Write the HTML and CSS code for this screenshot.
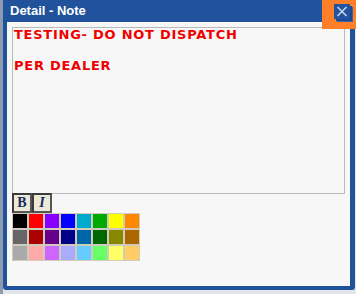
FILE: index.html
```html
<!DOCTYPE html>
<html>
<head>
<meta charset="utf-8">
<link rel="stylesheet" href="styles.css">
</head>
<body>
<div class="dialog">
  <div class="titlebar"><span class="title">Detail - Note</span></div>
  <div class="focus">
    <div class="close">
      <svg width="16" height="15" viewBox="0 0 16 15"><path d="M3.5 3 L12.5 12 M12.5 3 L3.5 12" stroke="#c9d5ee" stroke-width="1.6" fill="none"/></svg>
    </div>
  </div>
  <div class="content">
    <div class="editor">
      <div class="line">TESTING- DO NOT DISPATCH</div>
      <div class="line">&nbsp;</div>
      <div class="line">PER DEALER</div>
    </div>
    <div class="toolbar">
      <button class="tbtn bold">B</button>
      <button class="tbtn italic">I</button>
    </div>
    <div class="palette">
      <span class="sw" style="background:#000000"></span>
      <span class="sw" style="background:#ff0000"></span>
      <span class="sw" style="background:#8800ff"></span>
      <span class="sw" style="background:#0000ff"></span>
      <span class="sw" style="background:#00aacc"></span>
      <span class="sw" style="background:#00aa00"></span>
      <span class="sw" style="background:#ffff00"></span>
      <span class="sw" style="background:#ff8800"></span>
      <span class="sw" style="background:#666666"></span>
      <span class="sw" style="background:#aa0000"></span>
      <span class="sw" style="background:#660088"></span>
      <span class="sw" style="background:#000088"></span>
      <span class="sw" style="background:#0066aa"></span>
      <span class="sw" style="background:#006600"></span>
      <span class="sw" style="background:#888800"></span>
      <span class="sw" style="background:#aa6600"></span>
      <span class="sw" style="background:#aaaaaa"></span>
      <span class="sw" style="background:#ffaaaa"></span>
      <span class="sw" style="background:#cc66ff"></span>
      <span class="sw" style="background:#aaaaff"></span>
      <span class="sw" style="background:#66ccff"></span>
      <span class="sw" style="background:#66ff66"></span>
      <span class="sw" style="background:#ffff66"></span>
      <span class="sw" style="background:#ffcc66"></span>
    </div>
  </div>
</div>
</body>
</html>
```
FILE: styles.css
```css
html, body {
  margin: 0;
  padding: 0;
}
body {
  width: 356px;
  height: 294px;
  overflow: hidden;
  background: #e2e5ec;
  background-image: linear-gradient(to right, #8e9ab0 0, #8e9ab0 3px, transparent 3px);
  font-family: "DejaVu Sans", Verdana, sans-serif;
}
.dialog {
  position: relative;
  margin-left: 3px;
  width: 352px;
  box-sizing: border-box;
  background: #21529c;
  padding: 0 5px 4px 4px;
  border-bottom-left-radius: 3px;
  border-bottom-right-radius: 3px;
}
.titlebar {
  height: 22px;
  display: flex;
  align-items: center;
  padding-left: 3px;
}
.title {
  color: #ffffff;
  font-family: "Liberation Sans", Arial, sans-serif;
  font-weight: bold;
  font-size: 13px;
  margin-top: -1px;
}
.focus {
  position: absolute;
  left: 319px;
  top: 0;
  width: 34px;
  height: 29px;
  background: #fd7f2a;
}
.close {
  position: absolute;
  left: 12px;
  top: 4px;
  width: 16px;
  height: 15px;
  background: #22539e;
  box-shadow: 2px 2px 0 #1b4a90, 3px 3px 0 #3a64a6;
  display: flex;
}
.content {
  background: #f7f7f7;
  padding: 5px 5px 25px 5px;
}
.editor {
  height: 167px;
  box-sizing: border-box;
  border: 1px solid #b9b9b9;
  padding: 0 1px;
  color: #f00000;
  font-weight: bold;
  font-size: 13px;
  letter-spacing: 0.75px;
  line-height: 15.5px;
}
.editor .line:first-child {
  margin-top: -1px;
}
.toolbar {
  display: flex;
  height: 20px;
  margin-top: -1px;
}
.tbtn {
  width: 20px;
  height: 20px;
  box-sizing: border-box;
  border: 2px solid #3c3c3c;
  border-right-color: #555555;
  border-bottom-color: #555555;
  background: #ece9d8;
  padding: 0;
  margin: 0;
  font-family: "Liberation Serif", "Times New Roman", serif;
  font-size: 14px;
  line-height: 14px;
  color: #1a2a5a;
}
.bold {
  font-weight: bold;
}
.italic {
  font-style: italic;
  font-weight: bold;
}
.palette {
  display: grid;
  grid-template-columns: repeat(8, 16px);
  grid-auto-rows: 16px;
  width: 128px;
}
.sw {
  display: block;
  box-sizing: border-box;
  border: 1px solid #cfcbbd;
}
```
